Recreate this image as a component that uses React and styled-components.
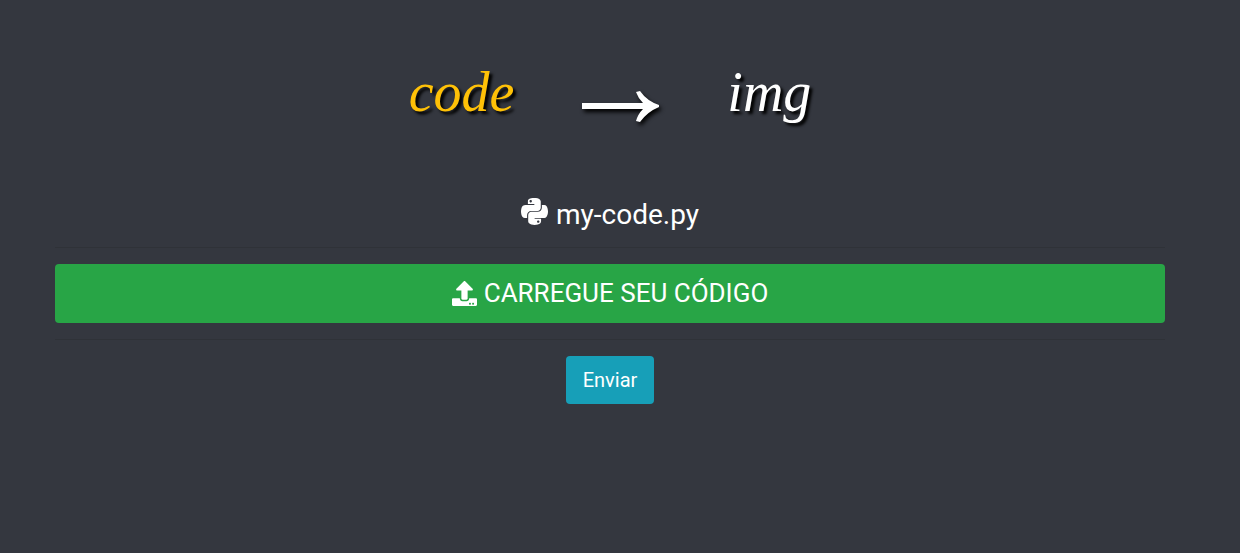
import React from "react";
import styled, { createGlobalStyle } from "styled-components";
import { FaPython, FaUpload } from "react-icons/fa";

const GlobalStyle = createGlobalStyle`
  *, *::before, *::after { box-sizing: border-box; }
  body {
    margin: 0;
    background: #34373f;
    color: #fff;
    font-family: Roboto, sans-serif;
    font-size: 16px;
    line-height: 24px;
  }
`;

const Page = styled.div`
  padding-right: 20px;
`;

const Container = styled.main`
  max-width: 1140px;
  margin: 0 auto;
  padding: 24px 15px;
  text-align: center;
`;

const Title = styled.h1`
  display: flex;
  justify-content: center;
  align-items: center;
  gap: 68px;
  height: 136px;
  margin: 0;
  font-family: "Liberation Serif", serif;
  font-style: italic;
  font-weight: 400;
  font-size: 56px;
  line-height: 64px;
  text-shadow: 3px 3px 3px #000;
`;

const Word = styled.span`
  color: ${({ $accent }) => ($accent ? "#ffc107" : "#fff")};
`;

const Arrow = styled.svg`
  width: 77px;
  height: 32px;
  margin-top: 30px;
  overflow: visible;
  filter: drop-shadow(2px 3px 2px #000);
`;

const FileName = styled.h2`
  display: flex;
  justify-content: center;
  align-items: center;
  gap: 8px;
  margin: 36px 0 0;
  font-weight: 400;
  font-size: 28px;
  line-height: 36px;

  svg {
    width: 27px;
    height: 31px;
    margin-bottom: 6px;
  }
`;

const Divider = styled.hr`
  margin: 16px 0;
  border: 0;
  border-top: 1px solid #2f3238;

  ${FileName} + & {
    margin-top: 14px;
  }
`;

const Button = styled.button`
  display: inline-flex;
  justify-content: center;
  align-items: center;
  border: 0;
  border-radius: 4px;
  color: #fff;
  font-family: inherit;
  cursor: pointer;
`;

const UploadButton = styled(Button)`
  display: flex;
  width: 100%;
  padding: 12px 16px;
  gap: 7px;
  background: #28a546;
  font-size: 26px;
  line-height: 35px;

  svg {
    width: 25px;
    height: 25px;
  }
`;

const SendButton = styled(Button)`
  padding: 8px 17px;
  background: #179fb8;
  font-size: 20px;
  line-height: 32px;
`;

export default function App() {
  return (
    <Page>
      <GlobalStyle />
      <Container>
        <Title>
          <Word $accent>code</Word>
          <Arrow viewBox="0 0 77 32" role="img" aria-label="para">
            <path
              fill="#fff"
              d="M0 12H61Q56 7 54 1L58 0Q65 10 77 14V16Q65 21 58 31L54 30Q56 23 61 18H0Z"
            />
          </Arrow>
          <Word>img</Word>
        </Title>
        <FileName>
          <FaPython aria-hidden="true" />
          my-code.py
        </FileName>
        <Divider />
        <UploadButton type="button">
          <FaUpload aria-hidden="true" />
          CARREGUE SEU CÓDIGO
        </UploadButton>
        <Divider />
        <SendButton type="submit">Enviar</SendButton>
      </Container>
    </Page>
  );
}
